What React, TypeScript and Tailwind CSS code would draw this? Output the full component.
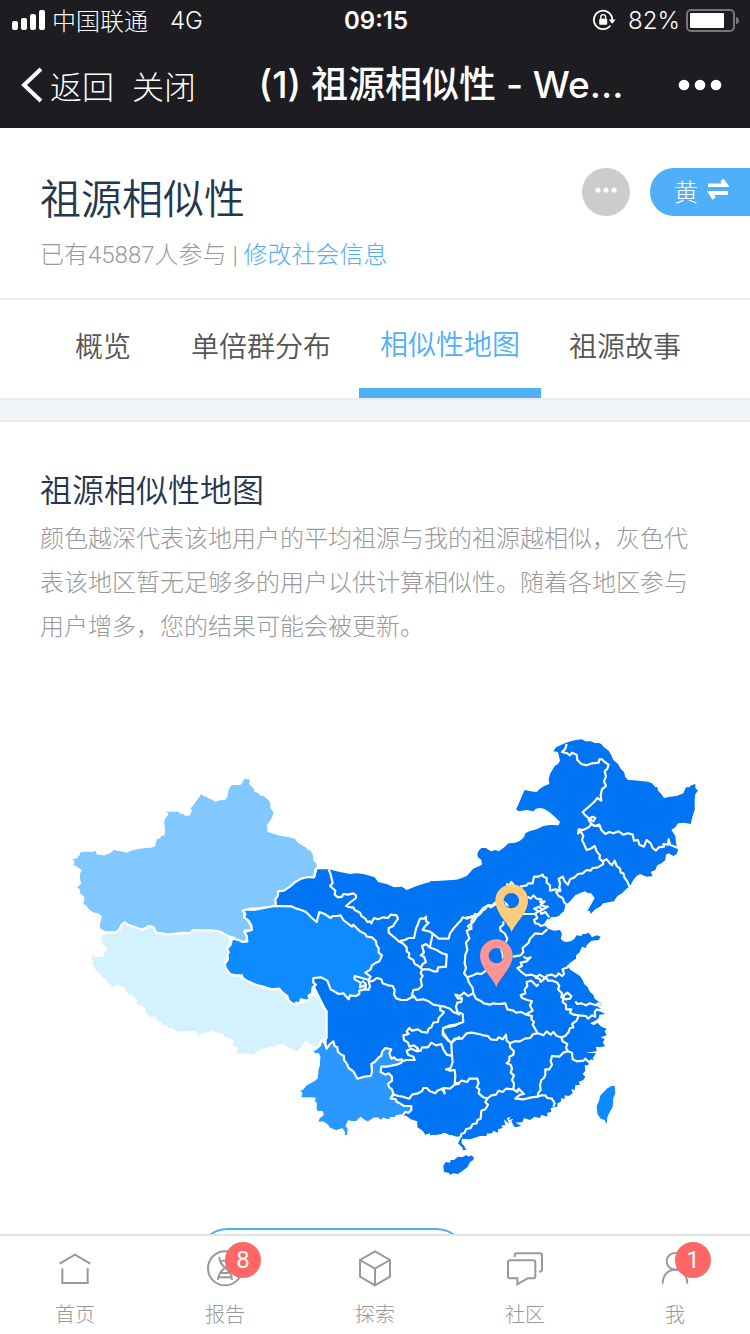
import React from "react";

const latin = "font-['Inter','Noto_Sans_CJK_SC',sans-serif]";

function StatusBar() {
  return (
    <div className={`grid h-[42px] grid-cols-[1fr_auto_1fr] items-center pl-3 pr-[10px] text-2xl leading-10 ${latin}`}>
      <div className="flex items-center">
        <svg className="mb-[2px] h-5 w-[34px]" viewBox="0 0 34 20" fill="#fff" aria-hidden="true">
          <rect x="0" y="11" width="6" height="9" rx="2" />
          <rect x="9" y="8" width="6" height="12" rx="2" />
          <rect x="18" y="4" width="6" height="16" rx="2" />
          <rect x="27" y="0" width="6" height="20" rx="2" />
        </svg>
        <span className="ml-[6px] pb-[2px] font-['Noto_Sans_CJK_SC',sans-serif] font-light">中国联通</span>
        <span className="ml-[22px] font-light">4G</span>
      </div>
      <span className="font-semibold">09:15</span>
      <div className="flex items-center justify-end">
        <svg className="mb-[2px] h-6 w-6" viewBox="0 0 24 24" fill="none" stroke="#fff" strokeWidth="1.8" aria-hidden="true">
          <path d="M18.4 17.5A9.2 9.2 0 1 1 20.3 12" />
          <path d="M16.8 11.6h6.8l-3.4 4.2z" fill="#fff" stroke="none" />
          <rect x="7.2" y="10.8" width="8" height="6" rx="1" fill="#fff" stroke="none" />
          <path d="M8.8 11V9a2.4 2.4 0 0 1 4.8 0v2" strokeWidth="1.4" />
        </svg>
        <span className="ml-3 font-light">82%</span>
        <svg className="ml-[6px] h-6 w-[54px]" viewBox="0 0 54 24" aria-hidden="true">
          <rect x="1" y="1" width="47" height="21" rx="4" fill="none" stroke="#77777b" strokeWidth="2" />
          <rect x="4" y="4" width="34" height="15" rx="1" fill="#fff" />
          <path d="M50 8q3 1 3 3.700t-3 3.700z" fill="#77777b" />
        </svg>
      </div>
    </div>
  );
}

function NavBar() {
  return (
    <div className="flex h-[86px] items-center pl-5 pr-7">
      <button className="flex items-center text-[32px] font-light leading-10">
        <svg className="mr-[6px] h-9 w-6" viewBox="0 0 24 36" fill="none" stroke="#fff" strokeWidth="4" aria-hidden="true">
          <path d="M21 2 4 18l17 16" />
        </svg>
        返回
      </button>
      <button className="ml-[18px] text-[32px] font-light leading-10">关闭</button>
      <h1 className="flex-1 pl-2 text-center font-['Inter','Noto_Sans_CJK_SC',sans-serif] text-[37px] font-medium leading-10 whitespace-nowrap">
        (1) 祖源相似性 - We...
      </h1>
      <button aria-label="更多">
        <svg className="h-3 w-11" viewBox="0 0 44 12" fill="#fff" aria-hidden="true">
          <circle cx="6" cy="6" r="5.300" />
          <circle cx="22" cy="6" r="5.300" />
          <circle cx="38" cy="6" r="5.300" />
        </svg>
      </button>
    </div>
  );
}

/* Each group of the map is digitised on its own sheet at three units to the pixel. */
function ChinaMap() {
  return (
    <svg className="block w-full" viewBox="0 730 750 460" role="img" aria-label="祖源相似性地图">
      <g fill="#0074f3">
        <g transform="translate(470 730) scale(.33333)">
          <path d="M-120,454L-40,450-10,438 10,416 36,404 34,390 24,382 22,372 26,362 34,354 48,354 56,360 64,364 76,360 86,364 100,354 116,340 136,338 150,332 162,322 166,310 178,304 200,298 220,288 240,285 266,286 270,276 256,262 238,246 222,236 208,234 198,236 190,244 170,240 146,244 138,238 146,222 154,202 164,180 182,184 200,186 210,176 222,168 238,162 236,146 240,132 254,108 264,102 270,92 264,66 250,64 258,52 266,48 284,40 302,34 318,30 336,28 346,34 362,34 376,40 384,38 394,42 402,52 416,62 424,76 430,90 444,102 452,116 462,126 466,142 474,150 490,151 520,154 534,155 546,160 556,172 562,170 564,182 574,192 582,204 600,200 620,198 640,190 648,172 658,172 664,166 676,162 676,174 684,182 676,192 674,210 674,240 668,258 662,282 644,278 624,280 616,292 604,300 616,318 618,340 624,360 620,372 610,378 596,370 588,374 586,390 574,400 562,406 556,420 542,426 548,438 530,440 510,432 500,438 490,450 480,468 468,478 456,490 442,498 432,514 420,516 400,520 390,530 376,538 362,552 360,542 352,544 362,526 374,504 362,488 354,490 346,484 332,488 316,496 298,516 286,526 282,544 274,550 262,556 246,562 236,560 210,600-120,600Z" />
        </g>
        <g transform="translate(220 860) scale(.33333)">
          <path d="M166,136L170,92 186,92 220,62 246,54 286,52 292,28 326,28 360,36 390,42 410,40 430,42 464,52 474,66 500,72 522,82 546,80 560,90 590,78 620,68 650,64 680,62 720,58H800V828H720L712,820 700,828 688,818 680,814 664,822 644,826 630,820 616,824 608,812 592,802 592,784 572,778 560,768 548,766 450,700 320,566V450L300,410Z" />
        </g>
        <g transform="translate(430 860) scale(.33333)">
          <path d="M0,100H240L406,136 396,146 390,166 376,172 366,168 358,178 346,176 340,186 346,198 354,206 372,212 390,210 396,222 392,236 400,244 408,246 422,244 432,238 440,226 454,228 458,222 466,222 476,218 486,232 500,226 512,230 506,240 484,242 470,256 468,264 456,260 448,278 438,286 438,296 426,304 410,318 422,330 450,348 460,364 462,372 472,380 480,396 490,404 494,416 508,426 520,430 516,436 496,434 512,446 514,456 526,462 508,464 506,474 496,482 480,490 492,496 502,488 514,500 530,506 524,514 530,526 512,532 524,538 518,548 526,558 510,562 498,560 500,574 466,578 498,580 488,594 492,600 480,602 474,616 464,616 466,632 458,642 466,650 460,660 446,666 450,674 436,676 434,690 424,688 428,700 416,708 404,706 404,718 394,714 392,726 382,730 382,740 370,742 362,744 364,756 352,758 352,770 334,764 330,774 314,770 300,780 282,774 278,786 256,788 274,798 254,802 244,784 250,776 236,780 242,770 230,774 238,792 222,778 226,796 214,796 218,804 204,808 204,818 190,812 186,820 160,822 144,830 120,838 96,836 94,848 104,860 108,870 98,870 98,864 84,850 90,838 96,828 78,830 70,824 60,826 44,818 22,822 0,826Z" />
          <path d="M40,916L48,906 60,908 62,900 72,900 84,890 96,892 108,886 118,890 122,886 132,892 130,900 120,906 112,922 98,932 84,942 70,940 60,944 56,938 42,936Z" />
        </g>
      </g>
      <g stroke="#fff" strokeWidth="6.500" strokeLinejoin="round">
        <g transform="translate(60 770) scale(.33333)">
          <path fill="#80c8ff" d="M32,286L40,280 36,266 42,262 50,262 52,254 56,254 58,244 76,241 94,243 94,237 100,242 110,238 112,250 134,253 150,246 162,236 172,240 180,240 200,245 218,237 245,232 270,230 282,227 288,204 298,202 300,198 300,194 310,194 312,180 309,155 314,142 322,132 316,128 316,126 308,122 358,122 362,128 370,127 376,134 388,133 392,120 386,116 394,108 404,94 416,78 424,66 432,76 440,76 446,82 458,86 466,92 478,88 494,86 500,76 502,60 510,44 522,42 540,42 548,30 550,22 572,26 574,34 570,40 584,54 586,62 596,66 602,74 610,74 618,80 628,88 634,98 634,112 644,126 640,142 634,152 624,166 626,184 660,194 682,197 708,204 712,212 726,222 740,230 744,236 756,240 762,256 764,272 770,276 774,290 766,300 762,322 744,321 724,326 706,336 690,350 672,362 654,364 654,376 646,388 648,410 620,412 590,416 570,416 550,422 554,432 552,442 562,448 572,466 578,480 554,482 554,490 562,496 560,512 548,516 528,510 524,504 508,500 476,484 454,482 426,483 400,480 388,490 370,488 360,490 324,494 288,488 280,472 266,468 262,472 244,480 232,474 220,470 206,466 194,458 184,466 180,476 168,488 150,488 134,486 118,478 116,464 122,440 114,434 98,430 84,420 76,408 64,404 70,392 68,380 58,372 56,360 50,354 32,348 54,346 60,340 56,324 58,306 62,302 48,292Z" />
          <path fill="#d3f1ff" d="M134,488H168L180,476 184,466 194,458 206,466 220,470 232,474 244,480 262,472 266,468 280,472 288,488 324,494 360,490 388,490 400,480 454,482 476,484 508,500 512,508 508,522 500,536 506,548 504,562 496,580 506,590 510,606 524,618 546,614 548,622 560,632 576,640 590,642 612,654 636,660 656,656 666,668 676,672 684,690 698,690 708,704 714,692 728,698 746,686 758,670 776,682 790,710 800,724 800,804 790,812 780,818 772,834 760,832 752,826 738,816 724,834 710,848 690,838 666,824 640,834 620,836 600,842 582,858 560,854 528,854 526,844 530,836 514,826 518,814 510,808 494,804 484,792 470,792 456,786 430,792 420,800 408,812 412,794 404,786 350,788 338,778 318,776 320,770 300,770 302,758 292,760 290,752 278,752 284,744 270,744 262,738 254,730 254,716 242,710 232,710 226,700 228,690 216,680 204,678 192,658 186,652 172,648 164,652 158,660 148,644 140,638 134,630 120,620 116,610 106,606 100,592 92,588 96,576 92,560 94,546 104,558 130,556 130,546 138,534 122,524 120,512 124,498Z" />
        </g>
        <g transform="translate(220 860) scale(.33333)">
          <path fill="#0e8bff" d="M68,152L84,148 100,150 164,138 214,139 230,146 244,150 258,156 276,174 290,186 298,156 314,162 332,174 338,168 350,168 362,166 370,180 396,200 400,194 420,214 436,222 440,230 456,232 468,244 470,256 476,264 476,278 486,286 478,304 468,308 456,316 452,328 436,338 452,350 446,360 426,354 404,348 404,358 422,368 420,382 438,374 436,388 418,392 418,402 408,408 390,406 386,418 370,400 356,402 332,388 322,362 304,352 280,354 280,368 288,374 278,382 276,400 266,406 268,418 258,422 242,418 240,430 228,428 222,434 206,422 202,408 186,396 178,386 156,388 130,380 112,376 80,362 68,354 66,346 46,346 30,342 18,326 14,312 24,298 22,284 26,278 22,264 32,254 36,236 56,240 68,246 82,244 80,228 74,216 96,210 94,196 86,182 72,172 76,162Z" />
          <path fill="#2b98ff" d="M276,570L286,568 300,556 304,540 314,550 320,566 330,552 340,544 344,558 352,562 354,576 364,584 372,588 372,600 380,610 386,624 400,634 412,656 432,650 452,648 456,636 454,612 464,606 476,592 484,588 486,576 496,564 514,568 508,580 514,596 522,592 530,600 546,598 544,608 530,614 500,620 484,620 482,636 496,644 506,640 516,650 516,662 504,672 508,682 516,688 520,700 512,716 528,718 530,726 540,730 552,738 574,738 574,750 566,758 556,756 548,766 530,768 526,774 512,774 512,780 500,780 490,776 482,784 474,776 462,776 444,788 432,782 422,774 410,786 392,786 386,784 380,798 386,804 384,828 370,828 372,818 366,808 350,814 342,812 326,804 322,796 310,788 290,788 296,774 308,764 306,756 292,756 286,748 288,730 280,724 284,716 240,714 244,700 236,690 248,686 258,674 280,662 290,654 292,632 296,616 298,590 294,582 282,582Z" />
        </g>
      </g>
      <path fill="#0e8bff" transform="translate(430 860) scale(.33333)" d="M554,678L556,700 550,714 548,740 538,758 532,772 530,792 524,780 512,776 502,762 500,738 508,720 510,708 530,686 544,678Z" />
      <g fill="none" stroke="#fff" strokeWidth="6.500" strokeLinejoin="round">
        <g transform="translate(470 730) scale(.33333)">
          <path d="M290,42L286,56 276,66 292,70 300,76 306,68 320,74 322,90 334,102 350,106 366,100 386,98 388,88 396,88 404,96 416,104 412,116 404,124 408,140 402,154 408,168 396,178 392,196 394,212 382,204 376,212 366,222 350,236 338,246 344,254 360,268 370,274 376,264 366,260 356,270 364,282 356,292 340,300 326,298 324,310 332,304 340,318 336,330 342,342 350,360 362,356 374,348 380,364 390,376 388,386 398,394" />
          <path d="M364,282L374,288 388,284 394,300 406,312 418,306 430,310 446,304 460,314 474,310 488,314 492,332 504,330 508,344 522,350 530,330 542,340 548,354 558,362 566,352 582,350 580,342 594,344 596,328 600,344 624,354" />
          <path d="M398,394L410,388 418,398 426,406 434,392 440,408 450,416 452,428 460,430 464,444 472,454 478,470M398,394L400,402 384,412 368,414 362,422 350,420 338,430 324,432 314,442 300,448 294,464 284,454 278,440 266,446 270,460 268,474 272,482 258,486 266,498 278,504 282,516 290,524" />
          <path d="M270,482L256,478 240,482 240,466 230,458 230,444 220,440 218,434 204,440 192,440 188,460 174,460 170,466 150,470M132,466L124,456 118,466 108,462M78,516L66,526 54,526 42,540 38,536 24,554 14,552 10,564 0,562-12,562M14,556L4,574 4,600" />
          <path d="M172,500L182,506 190,496 200,506 214,508 210,516 224,514 212,524 224,530 234,530 216,540 208,530 192,536 206,544 194,552 176,552 158,552M196,552L202,564 192,570 196,580 206,582 212,588 226,584M210,540L214,552 226,546 238,562" />
        </g>
        <g transform="translate(220 860) scale(.33333)">
          <path d="M326,28L332,44 336,60 338,70 330,78 346,92 344,104 354,112 366,110 370,102 384,104 400,100 408,106 408,114 392,126 378,138 390,142 400,142 404,150 420,158 424,168 436,176 442,186 450,184 454,190 462,174 474,178 490,172 504,174 512,164 530,166 534,176 524,190 520,198 506,204 506,218 518,228 528,236 536,244 554,240 566,234 582,234 588,206 594,192 600,176 612,176 618,170 618,184 626,188 614,200 608,210 628,214 640,222 656,236 686,236 690,220 702,204 720,184" />
          <path d="M536,244L548,250 560,262 560,274 568,280 566,292 580,300 584,312 596,318 602,324 608,312 618,306 612,290 602,286 612,278 606,258 618,252 628,262 650,270 666,280 680,284 678,320 654,322 652,334 640,334 626,328 606,328 602,340 608,348 602,358 606,378 594,388 580,390 576,406 582,414M630,260L638,222" />
          <path d="M438,372L426,362M430,386L446,390 450,378 446,366 460,362 470,354 484,358 488,370 504,376 518,378 524,390 522,404 530,416 544,420 560,420 582,408 590,420 610,418 626,424 640,434 662,438 674,440 690,446 700,456 720,464" />
          <path d="M662,438L660,450 672,456 666,464 656,474 654,486 640,488 634,502 626,506 622,518 606,516 594,508 576,512 568,504 560,514 566,522 550,526 552,540 564,548 568,560 582,556 594,566 590,574 574,566 560,572 564,584 580,590 584,600 560,600 546,604M590,574L602,572 606,562 624,562 634,548 648,556 664,552 670,568 680,584 696,588M720,488L706,496 690,500 670,504 668,514 674,524 684,538 694,550 696,588 698,606 692,624 678,628 690,632 704,630 706,650 704,670M694,550L704,540 720,530" />
          <path d="M512,716L520,704 536,708 548,710 568,716 576,704 594,700 606,694 610,684 620,684 630,694 646,700 652,692 666,686 674,700 670,684 690,686 704,674 720,670" />
        </g>
        <g transform="translate(430 860) scale(.33333)">
          <path d="M140,170L130,186 114,198 120,208 110,212 118,236 108,248 112,270 106,284 104,310 108,324 102,340 112,352 116,366 128,384 130,400 138,416 154,424 162,430 180,434 190,430 204,432 226,430 232,448 250,452 258,458 274,456 288,464 306,468 304,478 312,486 308,494 322,518M90,186L98,172 112,176 126,168 140,170 154,158 160,144 174,136 182,142 198,132M112,352L130,346 140,340 154,342 168,332M220,184L220,194 210,202 212,212 224,220 232,236 228,246" />
          <path d="M352,208L336,222 316,220 300,236 296,248 278,264 280,276 272,286 248,290M280,290L290,296 302,292 290,304 272,308 276,318 262,324 272,334 288,346 304,344 322,350 328,344 346,354 352,346 366,344 378,350 386,340 396,348 402,342 398,328 414,322M314,352L330,358 332,366 348,352 354,362 368,362 382,368 388,378 384,388 396,400 394,412 406,418 420,416 424,408 412,398 402,406 398,426 408,434 408,448 424,448 420,458 432,464 446,466 468,468 474,476 486,466 496,470 494,456 500,448 514,452M436,424L442,432 454,430 468,436 480,430 498,436 504,430 520,432" />
          <path d="M326,372L320,378 304,362 290,366 292,378 284,388 286,400 272,406 276,414 292,420 306,424 300,436 308,452 296,458 288,464M130,400L114,408 102,398 90,408 76,404 84,416 96,414 94,426 82,428 78,440 82,456 98,462 100,486 78,494 60,496 40,504 38,524 44,530 54,542 64,548 74,536 96,536 110,520 124,518 146,522 160,526 174,528 182,538 200,540 206,532 218,538 228,524 230,542 240,550 254,544 270,544 284,536 300,534 310,522 324,520 340,526 350,514 362,524 370,516 380,528 394,532 406,528 416,516 420,504 430,502 426,492 440,482 446,466" />
          <path d="M394,532L398,544 412,552 408,564 414,574 426,578 428,598 440,604 460,602 466,596 476,606 488,600M414,574L400,578 388,590 366,588 362,604 366,614 358,628 346,628 346,644 342,654 334,660 330,676 332,690 324,700 324,708M240,550L240,562 252,574 250,584 238,590 238,602 230,610 242,614 246,626 242,638 252,646 246,660 252,670 250,688" />
          <path d="M72,668L86,670 94,662 112,666 118,656 142,656 146,670 140,682 148,688 146,700 160,712 172,716 184,706 198,704 206,692 218,696 228,686 250,688 262,696 266,686 282,702 270,704 256,716 280,718 304,712 324,710 334,706 346,706 352,714 366,716 374,730 370,740M172,716L166,726 174,734 166,748 154,752 152,776 142,780 140,790 128,792 122,804 108,808 104,818 94,822 92,830" />
        </g>
      </g>
      <g transform="translate(430 860) scale(.33333)" fillRule="evenodd">
        <path fill="#ffcb7d" d="M245,217C238,192 196,160 196,122A49,49 0 0 1 294,122C294,160 252,192 245,217ZM244,99A23,23 0 1 0 244,145A23,23 0 1 0 244,99Z" />
        <path fill="#ff9495" d="M199,382C192,356 150,324 150,287A49,49 0 0 1 248,287C248,324 206,356 199,382ZM199,264A23,23 0 1 0 199,310A23,23 0 1 0 199,264Z" />
        <path fill="#fff" d="M222,122L226,136 238,141 232,130ZM210,267Q222,276 221,290L216,300Q217,282 210,267Z" />
      </g>
    </svg>
  );
}

const tabs = [
  { label: "概览", box: "px-8" },
  { label: "单倍群分布", box: "px-5" },
  { label: "相似性地图", box: "px-[21px]", active: true },
  { label: "祖源故事", box: "px-5" },
];

const navItems = [
  { label: "首页", icon: <path d="M14 44 60 17l46 27M22 58v44h76V58" /> },
  {
    label: "报告",
    badge: "8",
    icon: (
      <>
        <circle cx="60" cy="58" r="51" />
        <path d="M43 24c0 34 38 34 38 69M77 24c0 34-38 34-38 69M49 35h23M48 72h24M42 85h36" />
      </>
    ),
  },
  { label: "探索", icon: <path d="M60 7l45 26v50l-45 26-45-26V33zM15 33l45 26 45-26M60 59v50" /> },
  {
    label: "社区",
    icon: (
      <path d="M15 34h70q6 0 6 6v42q0 6-6 6H68L37 106V88H15q-6 0-6-6V40q0-6 6-6zM29 24v-5q0-6 6-6h70q6 0 6 6v43q0 6-9 6" />
    ),
  },
  {
    label: "我",
    badge: "1",
    icon: (
      <>
        <circle cx="60" cy="37" r="25" />
        <path d="M23 104c0-56 74-56 74 0" />
      </>
    ),
  },
];

export default function App() {
  return (
    <div className="flex h-screen flex-col bg-white font-['Noto_Sans_CJK_SC',sans-serif]">
      <header className="shrink-0 bg-[#1c1c21] text-white">
        <StatusBar />
        <NavBar />
      </header>

      <main className="min-h-0 flex-1 overflow-hidden">
        <section className="flex h-[172px] justify-between border-b-2 border-[#e9edf1] pt-10 pl-10">
          <div>
            <h2 className="text-[41px] font-[350] leading-[56px] text-[#25374e]">祖源相似性</h2>
            <p className="mt-[11px] font-['Roboto','Noto_Sans_CJK_SC',sans-serif] text-2xl font-light leading-10 text-[#999]">
              已有45887人参与 | <a href="#profile" className="text-[#4faff8]">修改社会信息</a>
            </p>
          </div>
          <div className="flex h-12 gap-5">
            <button aria-label="更多选项" className="flex size-12 items-center justify-center rounded-full bg-[#ccc] pb-1">
              <svg className="h-[6px] w-[22px]" viewBox="0 0 22 6" fill="#fff" aria-hidden="true">
                <circle cx="3" cy="3" r="2.600" />
                <circle cx="11" cy="3" r="2.600" />
                <circle cx="19" cy="3" r="2.600" />
              </svg>
            </button>
            <button className="flex w-[100px] items-center rounded-l-full bg-[#4faff8] pb-[2px] pl-6 text-2xl font-light leading-10 text-white">
              黄
              <svg className="mb-1 ml-2 h-6 w-6" viewBox="0 0 24 24" fill="#fff" aria-hidden="true">
                <path d="M2 6.500h13.500L14.500 4l3-2.500L23.500 10H2zM22 14v4H8.500l1 2.500-3 2.200L1 14z" />
              </svg>
            </button>
          </div>
        </section>

        <nav className="flex h-[100px] gap-2 border-b-2 border-[#e9edf1] pl-[43px] text-[28px] font-[350] leading-10">
          {tabs.map((t) => (
            <button
              key={t.label}
              className={
                t.active
                  ? `${t.box} border-b-[10px] border-[#4faff8] pb-[2px] text-[#4faff8]`
                  : `${t.box} pb-2 text-[#555]`
              }
            >
              {t.label}
            </button>
          ))}
        </nav>
        <div className="h-[22px] border-b-2 border-[#e9edf1] bg-[#f2f6fa]" />

        <section className="pt-[42px]">
          <div className="px-10">
            <h3 className="text-[32px] font-[350] leading-[48px] text-[#25374e]">祖源相似性地图</h3>
            <p className="mt-[3px] text-2xl font-light leading-[44px] text-[#999]">
              颜色越深代表该地用户的平均祖源与我的祖源越相似，灰色代表该地区暂无足够多的用户以供计算相似性。随着各地区参与用户增多，您的结果可能会被更新。
            </p>
          </div>
          <div className="mt-[83px]">
            <ChinaMap />
          </div>
          <button
            aria-label="查看"
            className="mt-[38px] ml-[196px] block h-16 w-[272px] rounded-full border-2 border-[#4faff8]"
          />
        </section>
      </main>

      <nav className="grid h-[100px] shrink-0 grid-cols-5 border-t-2 border-[#dfe3e8] bg-white">
        {navItems.map((item) => (
          <a key={item.label} href="#nav" className="flex flex-col items-center pt-[13px] text-xl font-light text-[#999]">
            <span className="relative">
              <svg className="size-10" viewBox="0 0 120 120" fill="none" stroke="#999" strokeWidth="6" aria-hidden="true">
                {item.icon}
              </svg>
              {item.badge && (
                <span className="absolute -top-[7px] left-5 flex size-9 items-center justify-center rounded-full bg-[#ff6666] font-['Roboto',sans-serif] text-2xl font-normal leading-9 text-white">
                  {item.badge}
                </span>
              )}
            </span>
            <span className="mt-[10px] leading-[30px]">{item.label}</span>
          </a>
        ))}
      </nav>
    </div>
  );
}
